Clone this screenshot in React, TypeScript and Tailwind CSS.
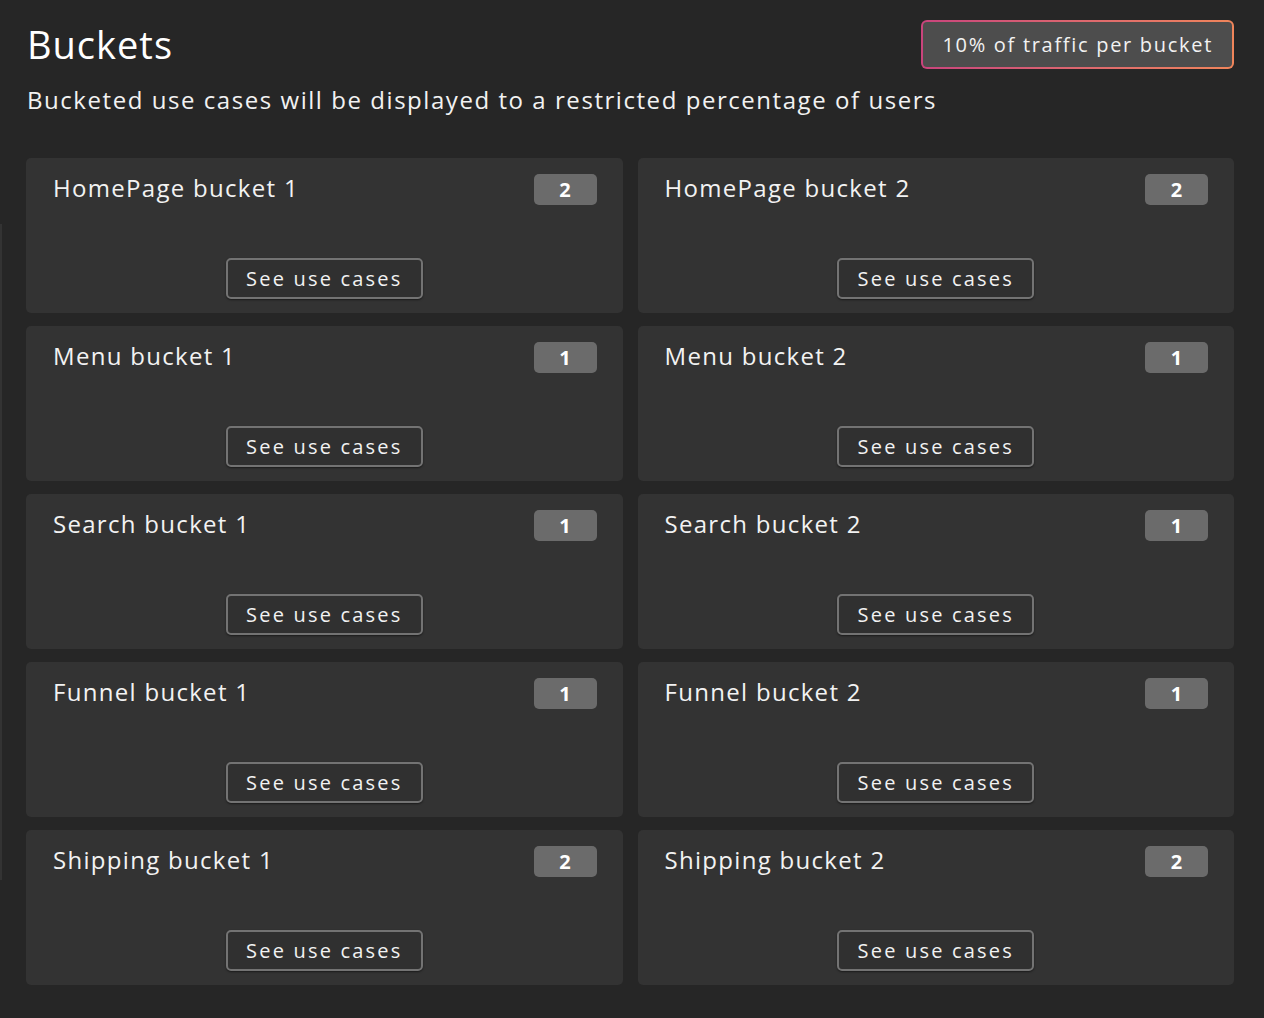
const buckets = [
  { name: 'HomePage bucket 1', count: 2 },
  { name: 'HomePage bucket 2', count: 2 },
  { name: 'Menu bucket 1', count: 1 },
  { name: 'Menu bucket 2', count: 1 },
  { name: 'Search bucket 1', count: 1 },
  { name: 'Search bucket 2', count: 1 },
  { name: 'Funnel bucket 1', count: 1 },
  { name: 'Funnel bucket 2', count: 1 },
  { name: 'Shipping bucket 1', count: 2 },
  { name: 'Shipping bucket 2', count: 2 },
];

function BucketCard({ name, count }: { name: string; count: number }) {
  return (
    <div className="flex h-[155px] flex-col rounded-[5px] bg-[#333333] px-[27px] pt-[14px] pb-[14px]">
      <div className="flex items-start justify-between">
        <span className="text-[24px] leading-[32px] tracking-[1.3px] text-[#f2f2f2]">{name}</span>
        <span className="mt-[2px] mr-[-1px] flex h-[31px] w-[63px] items-center justify-center rounded-[5px] bg-[#6b6b6b] text-[20px] font-bold text-white">
          {count}
        </span>
      </div>
      <div className="mt-auto flex justify-center">
        <button className="h-[41px] w-[197px] rounded-[5px] border-2 border-[#737373] bg-[#303030] text-[20px] tracking-[2.2px] text-[#f2f2f2] shadow-[0_1px_2px_rgba(0,0,0,0.5)]">
          See use cases
        </button>
      </div>
    </div>
  );
}

export default function App() {
  return (
    <div className="relative min-h-screen w-full bg-[#262626] px-[26px] pt-[20px] font-['Open_Sans',sans-serif] text-white">
      {/* faint edge of the panel behind */}
      <div className="absolute left-0 top-[224px] h-[656px] w-[2px] bg-[#333333]" />

      {/* Header */}
      <div className="flex items-start justify-between pr-[4px]">
        <h1 className="pl-[1px] text-[38px] leading-[48px] font-normal tracking-[1px]">Buckets</h1>
        <div className="rounded-[6px] bg-gradient-to-r from-[#c9447c] to-[#f0855a] p-[2px]">
          <div className="flex h-[45px] items-center rounded-[4px] bg-[#4d4d4d] px-[19px] text-[20px] tracking-[1.7px] text-[#f2f2f2]">
            10% of traffic per bucket
          </div>
        </div>
      </div>
      <p className="mt-[15px] pl-[1px] text-[24px] leading-[32px] tracking-[1.55px] text-[#f2f2f2]">
        Bucketed use cases will be displayed to a restricted percentage of users
      </p>

      {/* Buckets grid */}
      <div className="mt-[42px] grid grid-cols-2 gap-x-[15px] gap-y-[13px] pr-[4px]">
        {buckets.map((b) => (
          <BucketCard key={b.name} name={b.name} count={b.count} />
        ))}
      </div>
    </div>
  );
}
